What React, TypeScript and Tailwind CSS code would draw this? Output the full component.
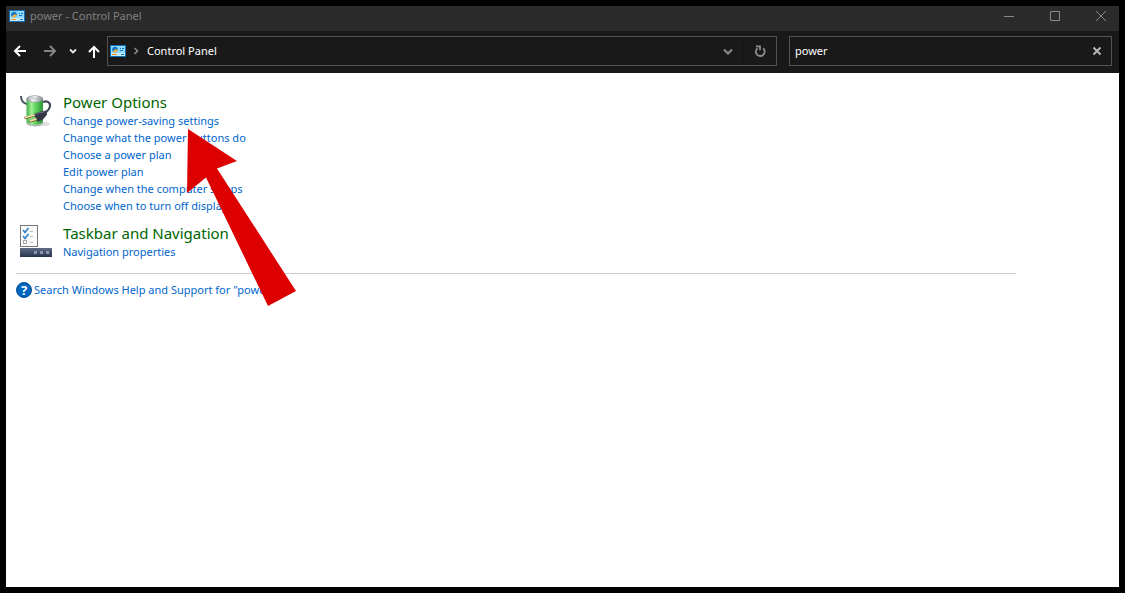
import React from "react";

function ControlPanelIcon() {
  return (
    <svg className="h-3 w-4 shrink-0" viewBox="0 0 16 12" aria-hidden="true">
      <rect width="16" height="12" fill="#0d70b8" />
      <rect x="1" y="1" width="14" height="10" fill="#8fd8fb" />
      <rect x="1" y="8" width="14" height="3" fill="#c3ecff" />
      <circle cx="5" cy="4.500" r="2.800" fill="#1277c4" />
      <path d="M5 4.500H7.800A2.800 2.800 0 0 1 3 6.500Z" fill="#f8b133" />
      <path d="M10 3.500h1M12 3.500h2M10 5.500h3" stroke="#1277c4" />
      <path d="M2 9.500h5" stroke="#f39a1c" />
      <path d="M11 9.500h3" stroke="#1277c4" />
    </svg>
  );
}

function PowerIcon() {
  return (
    <svg className="h-[34px] w-8" viewBox="0 0 32 34" aria-hidden="true">
      <defs>
        <linearGradient id="cell" x1="0" x2="1">
          <stop offset="0" stopColor="#3fae48" />
          <stop offset=".3" stopColor="#a0f094" />
          <stop offset=".55" stopColor="#62d460" />
          <stop offset="1" stopColor="#2b9438" />
        </linearGradient>
        <linearGradient id="cap" x1="0" x2="1">
          <stop offset="0" stopColor="#8b9299" />
          <stop offset=".4" stopColor="#f6f8f9" />
          <stop offset="1" stopColor="#7d858c" />
        </linearGradient>
      </defs>
      <ellipse cx="19" cy="30" rx="11" ry="2.500" fill="#dedede" />
      <path d="M1 2c0 4 1.500 7 6 8" fill="none" stroke="#465061" strokeWidth="2" />
      <path d="M6.500 5v23c0 4.500 16.500 4.500 16.500 0V5Z" fill="url(#cell)" />
      <path d="M6.500 27c0 5 16.500 5 16.500 0v2c0 4.500-16.500 4.500-16.500 0Z" fill="#b4bab8" />
      <ellipse cx="14.750" cy="5" rx="8.250" ry="3.200" fill="url(#cap)" stroke="#8b939a" strokeWidth=".6" />
      <ellipse cx="14.750" cy="3.200" rx="3.200" ry="1.600" fill="#e8edf0" stroke="#9299a0" strokeWidth=".5" />
      <path d="M23 8c4-1.500 7.500.5 7 4-.4 3.500-3 5.500-5.500 7.500" fill="none" stroke="#414a5c" strokeWidth="2.200" />
      <path d="M14 20 20 17.500 26.500 16.500 27 20.500 23 25.500 17.500 28Z" fill="#343743" />
      <path d="m15.500 20.500 4.500-2 5-.8" fill="none" stroke="#777b88" />
      <path d="M14.500 21.500 4.500 24M16.500 25.500 9.500 27.500" stroke="#7d642d" strokeWidth="2.400" />
      <path d="M14.500 21 5 23.500M16.500 25 10 27" stroke="#fae9b5" strokeWidth="1.400" />
    </svg>
  );
}

function TaskbarIcon() {
  return (
    <svg className="h-8 w-8" viewBox="0 0 32 32" aria-hidden="true">
      <defs>
        <linearGradient id="bar" x1="0" x2="0" y1="0" y2="1">
          <stop offset="0" stopColor="#5e6c86" />
          <stop offset="1" stopColor="#27344d" />
        </linearGradient>
      </defs>
      <rect x=".5" y=".5" width="17" height="21" fill="#fafafa" stroke="#777" />
      <path d="m3 5 2 2.500L8.500 3M3 11l2 2.500L8.500 9" fill="none" stroke="#2f82c9" strokeWidth="1.700" />
      <rect x="3.500" y="15.500" width="3" height="3" fill="none" stroke="#aaa" />
      <path d="M10 6.500h3M10 11.500h3M10 17.500h3" stroke="#bbb" />
      <rect y="23" width="32" height="9" fill="url(#bar)" />
      <path d="M14 26h3v3h-3zM20 26h3v3h-3zM26 26h3v3h-3z" fill="#8c96a8" />
    </svg>
  );
}

function HelpIcon() {
  return (
    <span
      aria-hidden="true"
      className="flex size-4 shrink-0 items-center justify-center rounded-full border border-[#004a91] bg-[#0067c0] text-[13px] leading-none font-bold text-white"
    >
      ?
    </span>
  );
}

function Category({ title, icon, links }: { title: string; icon: React.ReactNode; links: string[] }) {
  return (
    <section className="flex gap-[11px]">
      <div className="w-8 shrink-0 pt-[2px]">{icon}</div>
      <div>
        <h2 className="text-[15px] leading-5 text-[#006600]">
          <a href="#" className="hover:underline">{title}</a>
        </h2>
        <ul>
          {links.map((link) => (
            <li key={link} className="leading-[17px]">
              <a href="#" className="hover:underline">{link}</a>
            </li>
          ))}
        </ul>
      </div>
    </section>
  );
}

export default function App() {
  return (
    <div className="flex min-h-screen flex-col bg-black p-[6px] font-['Noto_Sans','Open_Sans',sans-serif] text-[11px]">
      <header className="flex h-[25px] items-start justify-between bg-[#2b2b2b] text-[#808080]">
        <div className="flex h-5 items-center gap-[5px] pl-[3px]">
          <ControlPanelIcon />
          <h1>power - Control Panel</h1>
        </div>
        <div className="flex h-5 gap-[10px]">
          <button aria-label="Minimize" className="flex w-9 items-center justify-center">
            <svg className="size-[10px]" viewBox="0 0 10 10"><path d="M0 5.500h10" stroke="#8a8a8a" /></svg>
          </button>
          <button aria-label="Maximize" className="flex w-9 items-center justify-center">
            <svg className="size-[10px]" viewBox="0 0 10 10"><path d="M.5.5h9v9h-9z" fill="none" stroke="#8a8a8a" /></svg>
          </button>
          <button aria-label="Close" className="flex w-9 items-center justify-center">
            <svg className="size-[10px]" viewBox="0 0 10 10"><path d="m0 0 10 10M10 0 0 10" stroke="#8a8a8a" /></svg>
          </button>
        </div>
      </header>

      <div className="flex h-[42px] items-start bg-[#191919] px-[7px] pt-[5px]">
        <nav className="flex h-[30px] w-[94px] shrink-0 items-center" aria-label="History">
          <button aria-label="Back" className="w-[30px]">
            <svg className="size-[14px]" viewBox="0 0 14 14"><path d="M13 7H2M7 2 2 7l5 5" fill="none" stroke="#fff" strokeWidth="2" /></svg>
          </button>
          <button aria-label="Forward" className="w-[26px]">
            <svg className="size-[14px]" viewBox="0 0 14 14"><path d="M1 7h11M7 2l5 5-5 5" fill="none" stroke="#858585" strokeWidth="2" /></svg>
          </button>
          <button aria-label="Recent locations" className="w-[18px]">
            <svg className="size-2" viewBox="0 0 8 8"><path d="m1 2.500 3 3 3-3" fill="none" stroke="#e8e8e8" strokeWidth="1.800" /></svg>
          </button>
          <button aria-label="Up" className="w-[14px]">
            <svg className="size-[14px]" viewBox="0 0 14 14"><path d="M7 14V3M2 8l5-5 5 5" fill="none" stroke="#fff" strokeWidth="2" /></svg>
          </button>
        </nav>
        <div className="flex h-[30px] min-w-0 grow-[666] basis-0 items-center border border-[#535353] pl-[2px] text-white">
          <ControlPanelIcon />
          <svg className="mx-[6px] size-2" viewBox="0 0 8 8" aria-hidden="true"><path d="m2.500 1 3 3-3 3" fill="none" stroke="#8a8a8a" strokeWidth="1.600" /></svg>
          <a href="#" className="ml-px grow">Control Panel</a>
          <button aria-label="Previous locations" className="flex h-full w-8 items-center justify-center border-r border-[#141414]">
            <svg className="size-[10px]" viewBox="0 0 10 10"><path d="m1 3.500 4 4 4-4" fill="none" stroke="#8c8c8c" strokeWidth="2" /></svg>
          </button>
          <button aria-label="Refresh" className="flex h-full w-8 items-center justify-center">
            <svg className="size-3" viewBox="0 0 12 12"><path d="M9.200 3.300A4.400 4.400 0 1 1 3.500 3.200M2 1.300h4v4" fill="none" stroke="#8c8c8c" strokeWidth="1.800" /></svg>
          </button>
        </div>
        <div className="ml-3 flex h-[30px] min-w-0 grow-[307] basis-0 items-center border border-[#535353] pr-[9px] pl-[5px]">
          <input aria-label="Search Control Panel" defaultValue="power" className="w-0 min-w-0 grow bg-transparent text-white outline-none" />
          <button aria-label="Clear search">
            <svg className="size-[10px]" viewBox="0 0 10 10"><path d="m1.500 1.500 7 7M8.500 1.500l-7 7" stroke="#b5b5b5" strokeWidth="2" /></svg>
          </button>
        </div>
      </div>

      <main className="relative grow bg-white pt-[19px] text-[#0066cc]">
        <div className="flex flex-col gap-[9px] pl-[14px]">
          <Category
            title="Power Options"
            icon={<PowerIcon />}
            links={[
              "Change power-saving settings",
              "Change what the power buttons do",
              "Choose a power plan",
              "Edit power plan",
              "Change when the computer sleeps",
              "Choose when to turn off display",
            ]}
          />
          <Category title="Taskbar and Navigation" icon={<TaskbarIcon />} links={["Navigation properties"]} />
        </div>
        <hr className="mt-[13px] ml-[10px] max-w-[1000px] border-[#cccccc]" />
        <a href="#" className="mt-2 ml-[10px] flex w-fit items-center gap-[2px] leading-4">
          <HelpIcon />
          Search Windows Help and Support for "power"
        </a>
        <svg className="pointer-events-none absolute top-[56px] left-[180px] h-[178px] w-[111px]" viewBox="0 0 111 178" aria-hidden="true">
          <path d="M2 0 51 32 31 39.500 110 162 82 177 20 48.500 1 64Z" fill="#dd0000" />
        </svg>
      </main>
    </div>
  );
}
